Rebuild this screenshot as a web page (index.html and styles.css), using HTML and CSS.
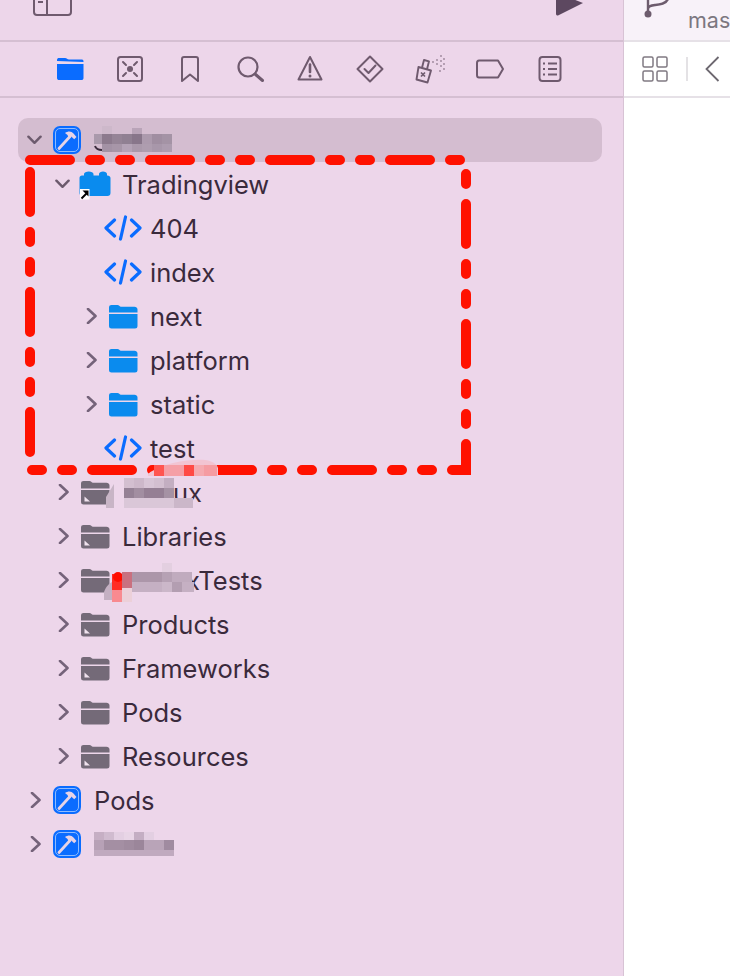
FILE: index.html
```html
<!DOCTYPE html>
<html lang="en">
<head>
    <meta charset="UTF-8">
    <title>Project navigator</title>
    <link rel="stylesheet" href="styles.css">
</head>
<body>
    <!-- shared icons -->
    <svg class="icon-defs" width="0" height="0">
        <symbol id="chev-down" viewBox="0 0 16 10"><path d="M1.5 1.5 8 8l6.500-6.500" fill="none" stroke="#6c5a6d" stroke-width="2.600" stroke-linecap="round" stroke-linejoin="round"/></symbol>
        <symbol id="chev-right" viewBox="-3.500 0 14 16"><path d="M1.500 1 9 8l-7.500 7" fill="none" stroke="#75637a" stroke-width="2.600" stroke-linecap="round" stroke-linejoin="round"/></symbol>
        <symbol id="project" viewBox="0 0 30 30">
            <rect x="1" y="1" width="28" height="28" rx="7" fill="#0a6cff"/>
            <rect x="3.500" y="3.500" width="23" height="23" rx="4.500" fill="none" stroke="#8fbcff" stroke-width="1"/>
            <path d="M7 23.500 18 11.500" stroke="#e6d3e6" stroke-width="2.800" stroke-linecap="round"/>
            <path d="M13 8c3.500-2.500 6.500-1.800 8.500 .5l3 3.500-2.300 2.300-3-2.800-2.500 1-1.200-2.500z" fill="#e6d3e6"/>
        </symbol>
        <symbol id="code" viewBox="0 0 38 26">
            <path d="M10.500 5 2 13l8.500 8M27.500 5 36 13l-8.500 8M21.500 2 16.500 24" fill="none" stroke="#0a6cff" stroke-width="3.200" stroke-linecap="round" stroke-linejoin="round"/>
        </symbol>
        <symbol id="folder-blue" viewBox="0 0 30 25">
            <path d="M1 8.500V3.500C1 1.800 2 1 3.500 1h6c1.500 0 2 1.500 3.500 1.800H26.500C28 2.800 29.500 3.800 29.500 5.500v3z" fill="#0a8bee"/>
            <path d="M1 10h28.500v12c0 1.700-1 2.500-2.500 2.500H3.500C2 24.500 1 23.700 1 22z" fill="#0a8bee"/>
        </symbol>
        <symbol id="folder-gray" viewBox="0 0 30 25">
            <path d="M1 8.500V3.500C1 1.800 2 1 3.500 1h6c1.500 0 2 1.500 3.500 1.800H26.500C28 2.800 29.500 3.800 29.500 5.500v3z" fill="#746a78"/>
            <path d="M1 10h28.500v12c0 1.700-1 2.500-2.500 2.500H3.500C2 24.500 1 23.700 1 22z" fill="#746a78"/>
            <path d="M4.500 16.500 10 21.500H4.500z" fill="#f0e2ee"/>
        </symbol>
        <symbol id="folder-plain" viewBox="0 0 30 25">
            <path d="M1 8.500V3.500C1 1.800 2 1 3.500 1h6c1.500 0 2 1.500 3.500 1.800H26.500C28 2.800 29.500 3.800 29.500 5.500v3z" fill="#746a78"/>
            <path d="M1 10h28.500v12c0 1.700-1 2.500-2.500 2.500H3.500C2 24.500 1 23.700 1 22z" fill="#746a78"/>
        </symbol>
        <symbol id="group" viewBox="0 0 34 30">
            <path d="M1.500 8c0-1.500 1-2.500 2.500-2.500H6V4c0-3.500 9.500-3.500 9.500 0v1.500H21V4c0-3.500 8-3.500 8 0v1.500h.5C31 5.500 32.500 6.500 32.500 8v15c0 2-1.200 3-3 3H4.500c-1.800 0-3-1-3-3z" fill="#0a8bee"/>
            <rect x="2" y="19" width="9.500" height="10.500" fill="#fff"/>
            <path d="M3.500 28.500 9 23" stroke="#000" stroke-width="2"/>
            <path d="M4.500 20.500H10.500V26.500z" fill="#000"/>
        </symbol>
    </svg>

    <div class="window">
        <div class="sidebar">
            <div class="titlebar">
                <svg class="panel-toggle" width="40" height="16" viewBox="0 0 40 16">
                    <path d="M1 -10V12c0 1.800 1 3 3 3H35c2 0 3-1.200 3-3V-10M14 -10V15" fill="none" stroke="#6f5a6e" stroke-width="2"/>
                    <path d="M5 2H10" stroke="#6f5a6e" stroke-width="2"/>
                </svg>
                <svg class="run-btn" width="27" height="16" viewBox="0 0 27 16">
                    <path d="M0 -6H4L27 3 2 15.500C1 15.800 0 15 0 14z" fill="#5d4860"/>
                </svg>
            </div>

            <div class="nav-tabs">
                <svg width="30" height="30" viewBox="0 0 30 30">
                    <path d="M2 7V6C2 4.500 3 4 4 4h6c2 0 2 1.500 4 1.500h13c1.200 0 1.500 1 1.500 2V8z" fill="#0a6cff"/>
                    <path d="M2 10H28.500V24c0 1.500-1 2-2 2H4C3 26 2 25.500 2 24z" fill="#0a6cff"/>
                </svg>
                <svg width="30" height="30" viewBox="0 0 30 30" fill="none" stroke="#6f5a6e" stroke-width="2">
                    <rect x="3" y="3" width="24" height="24" rx="2.500"/>
                    <circle cx="15" cy="15" r="3" fill="#6f5a6e" stroke="none"/>
                    <path d="M8 8l3 3M22 8l-3 3M8 22l3-3M22 22l-3-3" stroke-linecap="round"/>
                </svg>
                <svg width="30" height="30" viewBox="0 0 30 30" fill="none" stroke="#6f5a6e" stroke-width="2" stroke-linejoin="round">
                    <path d="M7 5c0-1 .8-2 2-2H21c1.200 0 2 1 2 2V27L15 20.500 7 27z"/>
                </svg>
                <svg width="30" height="30" viewBox="0 0 30 30" fill="none" stroke="#6f5a6e" stroke-width="2.200">
                    <circle cx="13" cy="13" r="9.500"/>
                    <path d="M20 20l7.500 6.500" stroke-width="3" stroke-linecap="round"/>
                </svg>
                <svg width="30" height="30" viewBox="0 0 30 30" fill="none" stroke="#6f5a6e" stroke-width="2" stroke-linejoin="round">
                    <path d="M15 3 26.500 25.500H3.500z"/>
                    <path d="M15 10.500V18" stroke-width="2.600" stroke-linecap="round"/>
                    <circle cx="15" cy="22" r="1.500" fill="#6f5a6e" stroke="none"/>
                </svg>
                <svg width="30" height="30" viewBox="0 0 30 30" fill="none" stroke="#6f5a6e" stroke-width="2" stroke-linejoin="round">
                    <path d="M15 2.500 27.500 15 15 27.500 2.500 15z"/>
                    <path d="M9.500 15l4 4 7-7.500" stroke-linecap="round"/>
                </svg>
                <svg class="tab-spray" width="32" height="30" viewBox="0 0 32 30" fill="none" stroke="#6f5a6e" stroke-width="1.900" stroke-linejoin="round">
                    <path d="M3.500 13 16 16.500 12.500 28.500 1.500 25.500z"/>
                    <path d="M7 13.800 9 6l5 1.300-2 8"/>
                    <path d="M6 18.500l4 4M10 18.500l-4 4" stroke-width="1.700"/>
                    <g fill="#6f5a6e" stroke="none" opacity=".65">
                        <circle cx="18" cy="8" r=".9"/><circle cx="22" cy="6" r=".9"/><circle cx="26" cy="2" r=".9"/><circle cx="22" cy="10" r=".9"/><circle cx="26" cy="7" r=".9"/><circle cx="29" cy="5" r=".9"/><circle cx="26" cy="12" r=".9"/><circle cx="29" cy="10" r=".9"/><circle cx="29" cy="15" r=".9"/><circle cx="25" cy="17" r=".9"/>
                    </g>
                </svg>
                <svg width="30" height="30" viewBox="0 0 30 30" fill="none" stroke="#6f5a6e" stroke-width="2" stroke-linejoin="round">
                    <path d="M3 9c0-1.500 .8-2.500 2-2.500H24L29 15l-5 8.500H5c-1.200 0-2-1-2-2.500z" transform="translate(-1 0)"/>
                </svg>
                <svg width="30" height="30" viewBox="0 0 30 30" fill="none" stroke="#6f5a6e" stroke-width="2">
                    <rect x="4.500" y="3" width="21" height="24" rx="3"/>
                    <path d="M13 9.500H22M13 15H22M13 20.500H22"/>
                    <path d="M8 9.500H10M8 15H10M8 20.500H10"/>
                </svg>
            </div>

            <div class="tree">
                <div class="row row-selected depth-0">
                    <svg class="chev chev-open"><use href="#chev-down"/></svg>
                    <span class="icon-slot"><svg class="ic-project"><use href="#project"/></svg></span>
                </div>
                <div class="row depth-1">
                    <svg class="chev chev-open"><use href="#chev-down"/></svg>
                    <span class="icon-slot"><svg class="ic-group"><use href="#group"/></svg></span>
                    <span class="label">Tradingview</span>
                </div>
                <div class="row depth-2">
                    <span class="chev"></span>
                    <span class="icon-slot"><svg class="ic-code"><use href="#code"/></svg></span>
                    <span class="label">404</span>
                </div>
                <div class="row depth-2">
                    <span class="chev"></span>
                    <span class="icon-slot"><svg class="ic-code"><use href="#code"/></svg></span>
                    <span class="label">index</span>
                </div>
                <div class="row depth-2">
                    <svg class="chev"><use href="#chev-right"/></svg>
                    <span class="icon-slot"><svg class="ic-folder"><use href="#folder-blue"/></svg></span>
                    <span class="label">next</span>
                </div>
                <div class="row depth-2">
                    <svg class="chev"><use href="#chev-right"/></svg>
                    <span class="icon-slot"><svg class="ic-folder"><use href="#folder-blue"/></svg></span>
                    <span class="label">platform</span>
                </div>
                <div class="row depth-2">
                    <svg class="chev"><use href="#chev-right"/></svg>
                    <span class="icon-slot"><svg class="ic-folder"><use href="#folder-blue"/></svg></span>
                    <span class="label">static</span>
                </div>
                <div class="row depth-2">
                    <span class="chev"></span>
                    <span class="icon-slot"><svg class="ic-code"><use href="#code"/></svg></span>
                    <span class="label">test</span>
                </div>
                <div class="row depth-1">
                    <svg class="chev"><use href="#chev-right"/></svg>
                    <span class="icon-slot"><svg class="ic-folder"><use href="#folder-gray"/></svg></span>
                    <span class="label label-ux">ux</span>
                </div>
                <div class="row depth-1">
                    <svg class="chev"><use href="#chev-right"/></svg>
                    <span class="icon-slot"><svg class="ic-folder"><use href="#folder-gray"/></svg></span>
                    <span class="label">Libraries</span>
                </div>
                <div class="row depth-1">
                    <svg class="chev"><use href="#chev-right"/></svg>
                    <span class="icon-slot"><svg class="ic-folder"><use href="#folder-plain"/></svg></span>
                    <span class="label label-tests">xTests</span>
                </div>
                <div class="row depth-1">
                    <svg class="chev"><use href="#chev-right"/></svg>
                    <span class="icon-slot"><svg class="ic-folder"><use href="#folder-gray"/></svg></span>
                    <span class="label">Products</span>
                </div>
                <div class="row depth-1">
                    <svg class="chev"><use href="#chev-right"/></svg>
                    <span class="icon-slot"><svg class="ic-folder"><use href="#folder-gray"/></svg></span>
                    <span class="label">Frameworks</span>
                </div>
                <div class="row depth-1">
                    <svg class="chev"><use href="#chev-right"/></svg>
                    <span class="icon-slot"><svg class="ic-folder"><use href="#folder-plain"/></svg></span>
                    <span class="label">Pods</span>
                </div>
                <div class="row depth-1">
                    <svg class="chev"><use href="#chev-right"/></svg>
                    <span class="icon-slot"><svg class="ic-folder"><use href="#folder-gray"/></svg></span>
                    <span class="label">Resources</span>
                </div>
                <div class="row depth-0">
                    <svg class="chev"><use href="#chev-right"/></svg>
                    <span class="icon-slot"><svg class="ic-project"><use href="#project"/></svg></span>
                    <span class="label">Pods</span>
                </div>
                <div class="row depth-0">
                    <svg class="chev"><use href="#chev-right"/></svg>
                    <span class="icon-slot"><svg class="ic-project"><use href="#project"/></svg></span>
                </div>
            </div>
        </div>

        <div class="editor">
            <div class="editor-title">
                <svg class="branch" width="30" height="20" viewBox="0 0 30 20" fill="none" stroke="#6d5c6d" stroke-width="2.400">
                    <path d="M6 0V14M6 9C6 6 9 5.500 13 5 18 4.500 24 4 26 -1"/>
                    <circle cx="6" cy="14" r="3.500" fill="#6d5c6d" stroke="none"/>
                </svg>
                <span class="branch-name">mas</span>
            </div>
            <div class="editor-bar">
                <svg width="26" height="26" viewBox="0 0 26 26" fill="none" stroke="#807a82" stroke-width="1.500">
                    <rect x="1" y="1" width="10" height="10" rx="1.500"/>
                    <rect x="15" y="1" width="10" height="10" rx="1.500"/>
                    <rect x="1" y="15" width="10" height="10" rx="1.500"/>
                    <rect x="15" y="15" width="10" height="10" rx="1.500"/>
                </svg>
                <span class="bar-sep"></span>
                <svg width="15" height="26" viewBox="0 0 15 26" fill="none" stroke="#6d6870" stroke-width="1.800">
                    <path d="M13.500 1 1.500 13l12 12"/>
                </svg>
            </div>
            <div class="editor-body"></div>
        </div>
    </div>

    <!-- pixelated blur and red marker drawn on top of the screenshot -->
    <svg class="markup" width="730" height="976" viewBox="0 0 730 976">
        <g fill="none" stroke="#ff1100" stroke-width="10" stroke-linecap="round">
            <path d="M30 160H460" stroke-dasharray="40 20 10 20 10 20"/>
            <path d="M30 172V452" stroke-dasharray="40 20 10 20 10 20"/>
            <path d="M32 470H432" stroke-dasharray="10 20 10 20 40 20"/>
            <path d="M466 174V470H452" stroke-dasharray="10 20 40 20 10 20" stroke-linejoin="miter"/>
        </g>

        <!-- first project name -->
        <g>
            <rect x="102" y="126" width="10" height="8" fill="#cdb8ca"/>
            <rect x="132" y="128" width="10" height="6" fill="#b9a4b8"/>
            <rect x="94" y="134" width="8" height="10" fill="#a999ab"/>
            <rect x="102" y="134" width="10" height="10" fill="#8c7a8d"/>
            <rect x="112" y="134" width="10" height="10" fill="#958496"/>
            <rect x="122" y="134" width="10" height="10" fill="#908092"/>
            <rect x="132" y="134" width="10" height="10" fill="#88768a"/>
            <rect x="142" y="134" width="10" height="10" fill="#ac9aad"/>
            <rect x="152" y="134" width="10" height="10" fill="#a08ea1"/>
            <rect x="162" y="134" width="10" height="10" fill="#a493a5"/>
            <rect x="102" y="144" width="10" height="8" fill="#a392a5"/>
            <rect x="112" y="144" width="10" height="8" fill="#a796a8"/>
            <rect x="122" y="144" width="10" height="8" fill="#b4a3b6"/>
            <rect x="132" y="144" width="10" height="8" fill="#aa99ab"/>
            <rect x="142" y="144" width="10" height="8" fill="#ae9daf"/>
            <rect x="152" y="144" width="10" height="8" fill="#a897aa"/>
            <rect x="162" y="144" width="10" height="8" fill="#ad9caf"/>
            <path d="M95 146c1 3 4 4 7 4" fill="none" stroke="#3a2a3c" stroke-width="2"/>
        </g>

        <!-- pink smear over the dashes -->
        <g>
            <path d="M148 474C162 463 190 459 205 460 214 461 219 466 218 470V476H148z" fill="#f2c4d2"/>
            <rect x="154" y="465" width="10" height="11" fill="#ff5550"/>
            <rect x="164" y="465" width="20" height="11" fill="#f59fa6"/>
            <rect x="184" y="465" width="10" height="11" fill="#ff4a45"/>
            <rect x="194" y="465" width="10" height="11" fill="#f5aab0"/>
            <rect x="204" y="465" width="13" height="11" fill="#f59ca2"/>
        </g>

        <!-- ux row -->
        <g>
            <path d="M106 497 114 484V508H106z" fill="#c8b5c6"/>
            <rect x="124" y="478" width="10" height="10" fill="#d3bfd0"/>
            <rect x="134" y="478" width="10" height="10" fill="#cdb8ca"/>
            <rect x="144" y="478" width="10" height="10" fill="#d8c5d6"/>
            <rect x="154" y="478" width="10" height="10" fill="#d3bfd0"/>
            <rect x="164" y="478" width="10" height="10" fill="#c3aec1"/>
            <rect x="124" y="488" width="10" height="10" fill="#958195"/>
            <rect x="134" y="488" width="10" height="10" fill="#a28ea1"/>
            <rect x="144" y="488" width="20" height="10" fill="#957f94"/>
            <rect x="164" y="488" width="10" height="10" fill="#a592a4"/>
            <rect x="124" y="498" width="50" height="10" fill="#dac7d8"/>
            <rect x="174" y="498" width="19" height="10" fill="#cbb7c9"/>
        </g>

        <!-- xTests row -->
        <g>
            <path d="M104 592C106 586 110 583 112 582V600H104z" fill="#c4b0c2"/>
            <rect x="112" y="574" width="10" height="16" fill="#ff2d25"/>
            <circle cx="118" cy="577" r="5" fill="#ff0d00"/>
            <rect x="112" y="590" width="10" height="12" fill="#f88a90"/>
            <rect x="122" y="572" width="10" height="16" fill="#c9707f"/>
            <rect x="122" y="588" width="10" height="14" fill="#ecd0d9"/>
            <rect x="132" y="572" width="30" height="10" fill="#ac96a9"/>
            <rect x="162" y="572" width="10" height="10" fill="#b6a1b4"/>
            <rect x="172" y="572" width="20" height="10" fill="#c0abbe"/>
            <rect x="132" y="582" width="30" height="10" fill="#c5b0c3"/>
            <rect x="162" y="582" width="10" height="10" fill="#cbb7c9"/>
            <rect x="172" y="582" width="10" height="10" fill="#b39eb1"/>
            <rect x="182" y="582" width="12" height="10" fill="#c5b0c3"/>
            <rect x="162" y="563" width="10" height="9" fill="#e3cfe0"/>
        </g>

        <!-- last project name -->
        <g>
            <rect x="94" y="832" width="10" height="8" fill="#c6afc4"/>
            <rect x="104" y="832" width="10" height="8" fill="#d0bbcf"/>
            <rect x="114" y="832" width="10" height="8" fill="#e3cfe2"/>
            <rect x="124" y="832" width="10" height="8" fill="#e8d5e6"/>
            <rect x="134" y="832" width="10" height="8" fill="#c4aec3"/>
            <rect x="144" y="832" width="10" height="8" fill="#e3cfe2"/>
            <rect x="94" y="840" width="10" height="10" fill="#b7a1b6"/>
            <rect x="104" y="840" width="20" height="10" fill="#a48fa3"/>
            <rect x="124" y="840" width="10" height="10" fill="#a08b9f"/>
            <rect x="134" y="840" width="10" height="10" fill="#9b869a"/>
            <rect x="144" y="840" width="20" height="10" fill="#b9a4b8"/>
            <rect x="164" y="840" width="10" height="10" fill="#a08ba0"/>
            <rect x="94" y="850" width="80" height="6" fill="#c0aabf"/>
        </g>
    </svg>
</body>
</html>
```

FILE: styles.css
```css
html, body {
    margin: 0;
    padding: 0;
    height: 976px;
    overflow: hidden;
}
body {
    position: relative;
    font-family: Inter, "Noto Sans", sans-serif;
    background-color: white;
}
.icon-defs {
    position: absolute;
}
.window {
    display: flex;
    height: 976px;
}

/* Left navigator */
.sidebar {
    width: 623px;
    flex-shrink: 0;
    background-color: #edd6ea;
    border-right: 1px solid #d8c3d5;
}
.titlebar {
    height: 40px;
    display: flex;
    justify-content: space-between;
    align-items: flex-start;
    padding: 0 40px 0 33px;
    border-bottom: 2px solid #d5bfd2;
}
.nav-tabs {
    height: 54px;
    display: flex;
    align-items: center;
    gap: 30px;
    padding-left: 55px;
    border-bottom: 2px solid #d5bfd2;
}
.tab-spray {
    margin-right: -2px;
}
.tree {
    padding: 20px 21px 0 18px;
}
.row {
    height: 44px;
    display: flex;
    align-items: center;
    color: #3a2a3c;
}
.row-selected {
    background-color: #d4bdd0;
    border-radius: 10px;
}
.depth-0 { padding-left: 9px; }
.depth-1 { padding-left: 37px; }
.depth-2 { padding-left: 65px; }
.chev {
    width: 14px;
    height: 16px;
    flex-shrink: 0;
}
.chev-open {
    height: 10px;
    width: 15px;
    margin-right: -1px;
}
.icon-slot {
    width: 28px;
    margin: 0 13px 0 12px;
    display: flex;
    justify-content: center;
    align-items: center;
    flex-shrink: 0;
}
.icon-slot svg {
    flex-shrink: 0;
}
.ic-project { width: 30px; height: 30px; }
.ic-group { width: 34px; height: 30px; transform: translateY(1px); }
.ic-code { width: 38px; height: 26px; }
.ic-folder { width: 30px; height: 25px; }
.label {
    font-size: 25.5px;
    line-height: 30px;
    padding-top: 2px;
    white-space: nowrap;
}
.label-ux { padding-left: 51px; }
.label-tests { padding-left: 64px; }

/* Right editor */
.editor {
    flex: 1;
    display: flex;
    flex-direction: column;
    min-width: 0;
    overflow: hidden;
}
.editor-title {
    height: 40px;
    flex-shrink: 0;
    background-color: #f8f2f9;
    border-bottom: 2px solid #e6e1e7;
    position: relative;
    padding-left: 18px;
}
.branch {
    display: block;
}
.branch-name {
    position: absolute;
    left: 64px;
    top: 8px;
    font-size: 21.5px;
    line-height: 24px;
    color: #7c7780;
}
.editor-bar {
    height: 54px;
    flex-shrink: 0;
    display: flex;
    align-items: center;
    padding-left: 18px;
    border-bottom: 2px solid #e6e1e7;
}
.bar-sep {
    width: 2px;
    height: 24px;
    background-color: #e4e2e5;
    margin: 0 17px 0 18px;
}
.editor-body {
    flex: 1;
    background-color: white;
}

/* Markup overlay */
.markup {
    position: absolute;
    left: 0;
    top: 0;
    pointer-events: none;
}
```
